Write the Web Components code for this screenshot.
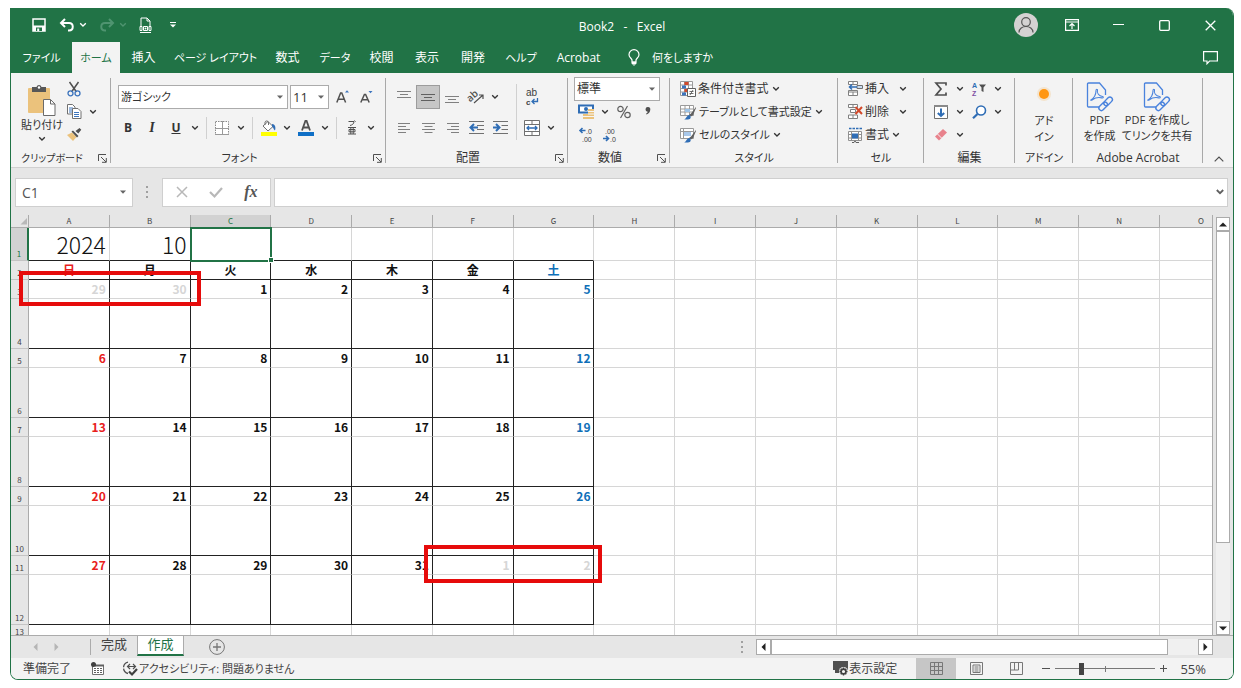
<!DOCTYPE html>
<html lang="ja">
<head>
<meta charset="utf-8">
<title>Book2 - Excel</title>
<style>
body { margin: 0; background: #fff; }
</style>
</head>
<body>
<excel-app></excel-app>
<script>
const ICONS = {
  save: [14, 14, '<path d="M1 1h12v12H1z" fill="none" stroke="#fff" stroke-width="1.5"/><path d="M1 7.5h12V13H1z" fill="#fff"/><path d="M4 9.5h6V13H4z" fill="#217346"/><path d="M5.2 10.5h2V13h-2z" fill="#fff"/>'],
  undo: [16, 14, '<path d="M6 1L2 5l4 4M2.500 5H10c5 0 5 7.500 0 7.500H9" fill="none" stroke="#fff" stroke-width="2"/>'],
  redo: [16, 14, '<path d="M10 1l4 4-4 4M13.500 5H6c-5 0-5 7.500 0 7.500h1" fill="none" stroke="#4f9470" stroke-width="2"/>'],
  preview: [13, 16, '<path d="M2 9V1h6l3 3v5M8 1v3h3" fill="none" stroke="#fff"/><path d="M1 9.500h2v4H1zM10 9.500h2v4h-2zM4.500 9.500h4v4h-4z" fill="none" stroke="#fff"/><path d="M1 15.500h11" stroke="#fff"/><circle cx="6.500" cy="11.500" r="1" fill="#fff"/>'],
  qat: [6, 6, '<path d="M0 .5h6" stroke="#fff"/><path d="M0 2.500h6L3 5.500z" fill="#fff"/>'],
  caret: [8, 6, '<path d="M1.200 1.200L4 4l2.800-2.800" fill="none" stroke="currentColor" stroke-width="1.300"/>'],
  bulb: [12, 17, '<path d="M4 13v-2C3.500 9 1 8.500 1 5.700a5 5 0 0 1 10 0C11 8.500 8.500 9 8 11v2z" fill="none" stroke="#fff" stroke-width="1.200"/><path d="M4 13h4v2H4zM5 16h2" fill="#fff" stroke="#fff" stroke-width=".8"/>'],
  user: [24, 24, '<circle cx="12" cy="12" r="12" fill="#d4d2d2"/><circle cx="12" cy="9" r="4.300" fill="none" stroke="#555" stroke-width="1.200"/><path d="M5 19.500c0-8 14-8 14 0" fill="none" stroke="#555" stroke-width="1.200"/>'],
  ribbonopt: [14, 12, '<path d="M.6.6h12.800v10.800H.6zM.6 3h12.800" fill="none" stroke="#fff" stroke-width="1.200"/><path d="M7 10V5M4.500 7L7 4.500 9.500 7" fill="none" stroke="#fff" stroke-width="1.200"/>'],
  min: [11, 11, '<path d="M0 4.500h11" stroke="#fff" stroke-width="1.200"/>'],
  max: [11, 11, '<rect x=".7" y=".7" width="9.600" height="9.600" rx="1" fill="none" stroke="#fff" stroke-width="1.300"/>'],
  close: [11, 11, '<path d="M.7.7l9.600 9.600M10.300.7L.7 10.300" stroke="#fff" stroke-width="1.300"/>'],
  comment: [15, 14, '<path d="M.6.6h13.800v9.400H6.500L4 12.800V10H.6z" fill="none" stroke="#fff" stroke-width="1.200"/>'],
  paste: [28, 31, '<rect x="0" y="3" width="22" height="25" rx="1" fill="#ebc27c"/><path d="M4 2h4.500a2.600 2.600 0 0 1 5 0H18v5H4z" fill="#575757"/><circle cx="11" cy="2.500" r="1.200" fill="#fff"/><path d="M15.500 14.500h7l4.500 4.500v11.500H15.500z" fill="#fff" stroke="#6b6b6b"/><path d="M22.500 14.500V19H27" fill="none" stroke="#6b6b6b"/>'],
  cut: [14, 16, '<path d="M2.500 1l7 10M11.500 1l-7 10" stroke="#505050" stroke-width="1.500"/><circle cx="3.500" cy="12.300" r="2.500" fill="none" stroke="#3c74bd" stroke-width="1.300"/><circle cx="10.500" cy="12.300" r="2.500" fill="none" stroke="#3c74bd" stroke-width="1.300"/>'],
  copy: [15, 15, '<path d="M.5.500h5L8 3v7H.5z" fill="#fff" stroke="#707070"/><path d="M2 4h4M2 6h4M2 8h4" stroke="#3c74bd"/><path d="M5.500 4.500h5.500L14 7.500v7H5.500z" fill="#fff" stroke="#707070"/><path d="M7 8.500h5M7 10.500h5M7 12.500h5" stroke="#3c74bd"/>'],
  painter: [15, 13, '<path d="M0 7l5-2.500L9.500 9 6 13z" fill="#ebc27c"/><path d="M4.500 3.500l1.500-1L11.500 8l-1.500 1.500zM8.500 3l4-3 1.800 1.800-3 3.700z" fill="#505050"/>'],
  grow: [14, 14, '<path d="M.8 12.500L4.600 3h1.200l3.800 9.500M2.300 9.300h5.800" fill="none" stroke="#505050" stroke-width="1.500"/><path d="M9 2.500l2-2.200 2 2.200z" fill="#3c74bd"/>'],
  shrink: [14, 14, '<path d="M.8 12.500L4.400 4.500h1.200l3.600 8M2.300 9.800h5.300" fill="none" stroke="#505050" stroke-width="1.500"/><path d="M8.500 1h4L10.500 3.200z" fill="#3c74bd"/>'],
  borders: [14, 14, '<path d="M.5.500h13v13H.5z" fill="#fff" stroke="#8a8a8a" stroke-dasharray="1.500 1"/><path d="M0 13.500h14M7.500 0v14M0 7.500h14" stroke="#9a9a9a"/>'],
  fill: [17, 16, '<path d="M3 6l5-4.500 5 5-5 4.500z" fill="#fff" stroke="#707070"/><path d="M5 5V2a2 2 0 0 1 3.500 0v3" fill="none" stroke="#707070"/><path d="M12 4c3 0 4 3 3 6.500-2-1-1-3-3-4z" fill="#2f6db5"/><path d="M1 12h16v4H1z" fill="#ff0"/>'],
  fontcolor: [16, 16, '<path d="M4 10.500L7.400 1h1.200L12 10.500M5.200 7.500h5.600" fill="none" stroke="#505050" stroke-width="1.800"/><path d="M0 12h16v4H0z" fill="#0f6fc6"/>'],
  phonetic: [10, 15, '<path d="M1.500 1.500h5.500C7 4 5 5 3 5.500M7.500.5l1 1.200" fill="none" stroke="#505050"/><path d="M1 7.500h8M1 14h8M2 9.500h6v2.300H2zM3.800 7.500V14M6.200 7.500V14" fill="none" stroke="#505050"/>'],
  vtop: [14, 14, '<path d="M0 1.500h14M3 4.500h8M0 7.500h14" stroke="#808080"/>'],
  vmid: [14, 14, '<path d="M0 4.500h14M3 7.500h8M0 10.500h14" stroke="#606060"/>'],
  vbot: [14, 14, '<path d="M0 6.500h14M3 9.500h8M0 12.500h14" stroke="#808080"/>'],
  left: [13, 12, '<path d="M0 1.500h12M0 4.500h8M0 7.500h12M0 10.500h8" stroke="#808080"/>'],
  center: [13, 12, '<path d="M0 1.500h13M2.500 4.500h8M0 7.500h13M2.500 10.500h8" stroke="#808080"/>'],
  right: [13, 12, '<path d="M1 1.500h12M5 4.500h8M1 7.500h12M5 10.500h8" stroke="#808080"/>'],
  orient: [16, 15, '<text x="-1" y="10" transform="rotate(-42 5 8)" font-family="Open Sans" font-size="10" font-weight="600" fill="#505050">ab</text><path d="M6 14l9-8M11 6h4v4" fill="none" stroke="#505050" stroke-width="1.200"/>'],
  outdent: [15, 13, '<path d="M0 .5h15M8 4.500h7M8 8.500h7M0 12.500h15" stroke="#707070"/><path d="M9 6.500H1.500M5 3L1.500 6.500 5 10" fill="none" stroke="#2f6db5" stroke-width="2"/>'],
  indent: [15, 13, '<path d="M0 .5h15M8.500 4.500H15M8.500 8.500H15M0 12.500h15" stroke="#707070"/><path d="M0 6.500h6.500M3 3l3.500 3.500L3 10" fill="none" stroke="#2f6db5" stroke-width="2"/>'],
  wrap: [14, 18, '<text x="1" y="8" font-family="Liberation Sans" font-size="10" fill="#404040">ab</text><text x="1" y="17" font-family="Liberation Sans" font-size="8" font-weight="700" fill="#404040">c</text><path d="M12.500 10v3.500H7.500M9.500 11L7 13.500 9.500 16" fill="none" stroke="#2f6db5" stroke-width="1.300"/>'],
  merge: [16, 16, '<path d="M.5.500h15v15H.5zM.5 4.500h15M.5 11.500h15M8 .5v4M8 11.500v4" fill="#fff" stroke="#707070"/><path d="M3 8h10M5 6L3 8l2 2M11 6l2 2-2 2" fill="none" stroke="#2f6db5" stroke-width="1.300"/>'],
  money: [17, 16, '<path d="M1 1.500h14v7H1z" fill="#fff" stroke="#2f6db5" stroke-width="2"/><circle cx="8" cy="5" r="2" fill="#2f6db5"/><path d="M10 5h6v10h-6zM5 10h5v5H5z" fill="#ebc27c"/><path d="M10 7.500h6M10 10h6M5 12.500h11" stroke="#f5f5f5"/>'],
  percent: [14, 14, '<circle cx="3.500" cy="4" r="2.700" fill="none" stroke="#606060" stroke-width="1.200"/><circle cx="10.500" cy="10" r="2.700" fill="none" stroke="#606060" stroke-width="1.200"/><path d="M10.500 1l-7 12" stroke="#606060" stroke-width="1.200"/>'],
  comma: [6, 9, '<path d="M3 0a2.300 2.300 0 0 1 2.300 2.500C5.300 5 3.500 6.800 1.500 7.500L1 6.700c1-.5 1.700-1.200 1.700-2A2.200 2.200 0 0 1 3 0z" fill="#505050"/>'],
  incdec: [14, 16, '<path d="M6.500 3.500H1M3.500 1L1 3.500 3.500 6" fill="none" stroke="#2f6db5" stroke-width="1.600"/><text x="7" y="6.500" font-family="Liberation Sans" font-size="7" fill="#404040">.0</text><text x="3" y="14.500" font-family="Liberation Sans" font-size="7" fill="#404040">.00</text>'],
  decdec: [14, 16, '<text x="2" y="6.500" font-family="Liberation Sans" font-size="7" fill="#404040">.00</text><path d="M0 11.500h5.500M3 9L5.500 11.500 3 14" fill="none" stroke="#2f6db5" stroke-width="1.600"/><text x="7" y="14.500" font-family="Liberation Sans" font-size="7" fill="#404040">.0</text>'],
  cond: [16, 16, '<path d="M.5.500h12v14H.5zM.5 4h12M.5 7.500h12M.5 11h12M4.500 .5v14M8.500 .5v14" fill="#fff" stroke="#9a9a9a"/><path d="M4.500 1h4v3h-4zM4.500 8h3v3h-3z" fill="#d2492a"/><path d="M2 4.500h4v3H2zM2 11.500h4v3H2z" fill="#3c74bd"/><path d="M7.500 7.500h8v8h-8z" fill="#fff" stroke="#606060"/><path d="M9.500 10.500h4M9.500 12.500h4M13 9l-3 5" stroke="#505050" stroke-width=".8"/>'],
  tablefmt: [17, 16, '<path d="M.5 1.500h13v10H.5zM.5 5h13M.5 8h13M5 1.500v10M9.500 1.500v10" fill="#fff" stroke="#9a9a9a"/><path d="M5 5h5v3H5z" fill="#9dc3e6"/><path d="M16 3l-5 6.500-2 1.500 2 1.500 2-1.500 3-7z" fill="#606060"/><path d="M4 15.500c2 0 2.500-4.500 5.500-4.500 2 1.500 1.500 4.500-1.500 4.500z" fill="#2f6db5"/>'],
  cellstyle: [17, 16, '<path d="M.5 1.500h13v10H.5zM.5 4.500h13M3.500 1.500v10" fill="#fff" stroke="#9a9a9a"/><path d="M4 5h7v4H4z" fill="#a9c8ea"/><path d="M16 3l-5 6.500-2 1.500 2 1.500 2-1.500 3-7z" fill="#606060"/><path d="M4 15.500c2 0 2.500-4.500 5.500-4.500 2 1.500 1.500 4.500-1.500 4.500z" fill="#2f6db5"/>'],
  insert: [15, 15, '<path d="M.5.500h9v3h-9zM5 .5v3M.5 11h9v3.500h-9zM5 11v3.500M.5 11V9.500h9V11" fill="#fff" stroke="#808080"/><path d="M9 4.500h5.500v3H9z" fill="#c9dcf0" stroke="#707070"/><path d="M9 6H1.500M4 3.500L1.500 6 4 8.500" fill="none" stroke="#2f6db5" stroke-width="1.500"/>'],
  remove: [15, 15, '<path d="M.5.500h9v3h-9zM5 .5v3M.5 11h9v3.500h-9zM5 11v3.500M2.500 5.500h5v3h-5z" fill="#fff" stroke="#808080"/><path d="M7.500 3l6.500 7M14 3l-6.500 7" stroke="#d2492a" stroke-width="2"/>'],
  format: [15, 16, '<path d="M1 1.500h13" stroke="#2f6db5" stroke-width="1.500" stroke-dasharray="2.500 1"/><path d="M.5 4.500h13v9H.5zM3.500 4.500v9M10.500 4.500v9M.5 7.500h13M.5 11h13" fill="#fff" stroke="#909090"/><path d="M4 6.500h6v5H4z" fill="#2f6db5"/><path d="M4 15.500h2l1-1.500 1 1.500h3" fill="none" stroke="#606060"/>'],
  sum: [12, 14, '<path d="M11 3.500V1H1l5 6-5 6h10v-2.500" fill="none" stroke="#505050" stroke-width="1.700"/>'],
  sort: [14, 16, '<text x="0" y="7" font-family="Liberation Sans" font-size="7" font-weight="700" fill="#2f6db5">A</text><text x="0" y="15" font-family="Liberation Sans" font-size="7" font-weight="700" fill="#7e4fa3">Z</text><path d="M7 3.500h7l-2.500 3V11l-2-1V6.500z" fill="#505050"/>'],
  filldown: [14, 14, '<path d="M.5.500h13v13H.5z" fill="#fff" stroke="#707070"/><path d="M0 0h14v2H0z" fill="#8a8a8a"/><path d="M7 3.500V11M3.800 8L7 11l3.200-3" fill="none" stroke="#2f6db5" stroke-width="2"/>'],
  find: [15, 14, '<circle cx="9" cy="5.500" r="4.500" fill="#fff" stroke="#2f6db5" stroke-width="1.600"/><path d="M5.500 9L1 13.300" stroke="#2f6db5" stroke-width="2.200"/>'],
  erase: [14, 13, '<path d="M1 8.500L9 1l4 3.500-8 8z" fill="#e8828c"/><path d="M3.500 6l4 4" stroke="#f5f5f5"/>'],
  dot: [24, 24, '<circle cx="12" cy="12" r="7" fill="#f8b860" opacity=".25"/><circle cx="12" cy="12" r="5" fill="#ff9612"/>'],
  pdf: [28, 30, '<path d="M19.500 13V8l-6-7h-11a1 1 0 0 0-1 1v22a1 1 0 0 0 1 1H13" fill="none" stroke="#4a83dd" stroke-width="1.300"/><path d="M5 18c3-2 5-6 5-9.500 0-1.600 1.700-1.600 1.500 0C10.500 11 13 14 16.500 14.500c1.300.4 1 1.600-.6 1.400-3.700-.8-6.500-.4-9.500 1.900-1.100.8-2.200.3-1.400.2z" fill="none" stroke="#4a83dd" stroke-width="1.100"/><g transform="rotate(-45 20 21.500)" fill="none" stroke="#4a83dd" stroke-width="1.400"><rect x="11" y="19" width="10" height="5" rx="2.500"/><rect x="18" y="19" width="10" height="5" rx="2.500"/></g>'],
  launcher: [9, 9, '<path d="M.5 7V.5H8" fill="none" stroke="#505050"/><path d="M3 3l5 5M8.300 4v4.300H4" fill="none" stroke="#505050"/>'],
  up: [10, 6, '<path d="M.7 5.300L5 1l4.300 4.300" fill="none" stroke="#505050" stroke-width="1.200"/>'],
  tri: [6, 4, '<path d="M0 .5h6L3 3.800z" fill="#666"/>'],
  dots: [3, 12, '<path d="M0 0h2v2H0zM0 5h2v2H0zM0 10h2v2H0z" fill="#a0a0a0"/>'],
  cancel: [12, 12, '<path d="M1 1l10 10M11 1L1 11" stroke="#b8b8b8" stroke-width="1.500"/>'],
  enter: [14, 11, '<path d="M1 5l4.500 4.500L13 1" fill="none" stroke="#b8b8b8" stroke-width="2.200"/>'],
  fdown: [8, 6, '<path d="M.8 1L4 4.200 7.200 1" fill="none" stroke="#606060" stroke-width="1.800"/>'],
  aup: [8, 5, '<path d="M0 4.500h8L4 .5z" fill="#222"/>'],
  adown: [8, 5, '<path d="M0 .5h8L4 4.500z" fill="#222"/>'],
  aleft: [5, 8, '<path d="M4.500 0v8L.5 4z" fill="#222"/>'],
  aright: [5, 8, '<path d="M.5 0v8l4-4z" fill="#222"/>'],
  navl: [5, 8, '<path d="M4.500 0v8L.5 4z" fill="#b5b5b5"/>'],
  navr: [5, 8, '<path d="M.5 0v8l4-4z" fill="#b5b5b5"/>'],
  plus: [16, 16, '<circle cx="8" cy="8" r="7.400" fill="none" stroke="#777"/><path d="M8 4v8M4 8h8" stroke="#777" stroke-width="1.300"/>'],
  corner: [8, 8, '<path d="M7 1v6.500H.5z" fill="#b8b8b8"/>'],
  macro: [13, 13, '<path d="M1.500 3.500h11v9h-11z" fill="#fff" stroke="#707070"/><path d="M3 6.500h9M3 8.500h9M3 10.500h9" stroke="#606060" stroke-dasharray="2 1"/><path d="M4 2.500h9v2H4z" fill="#606060"/><circle cx="2.500" cy="2.500" r="2.500" fill="#404040"/>'],
  access: [16, 15, '<path d="M6 1.200A5.800 5.800 0 0 0 6 12.500" fill="none" stroke="#505050" stroke-width="1.300" stroke-dasharray="7 1.500"/><path d="M5 5.500h8M11 3l2.500 2.500L11 8M8 3L5.500 5.500 8 8" fill="none" stroke="#505050" stroke-width="1.200"/><path d="M7 10.500l3 3 5-5.500" fill="none" stroke="#404040" stroke-width="2.200"/>'],
  display: [15, 15, '<path d="M0 0h15v9H0zM2 9h5v3H2z" fill="#505050"/><circle cx="10.500" cy="10.500" r="4.500" fill="#f3f3f3"/><circle cx="10.500" cy="10.500" r="2.400" fill="#f3f3f3" stroke="#404040" stroke-width="1.600"/><path d="M10.500 6.500v1.500M10.500 13v1.500M6.500 10.500H8M13 10.500h1.500M7.700 7.700l1 1M12.300 12.300l1 1M13.300 7.700l-1 1M8.700 12.300l-1 1" stroke="#404040" stroke-width="1.400"/>'],
  vnormal: [13, 13, '<path d="M.5.500h12v12H.5zM4.500 .5v12M8.500 .5v12M.5 4.500h12M.5 8.500h12" fill="none" stroke="#777"/>'],
  vpage: [13, 13, '<path d="M.5.500h12v12H.5zM3 3h7v7.500H3z" fill="none" stroke="#777"/><path d="M4.500 5h4M4.500 7h4M4.500 9h4" stroke="#777"/>'],
  vbreak: [13, 13, '<path d="M.5.500h12v12H.5zM4.500 .5v7.500M8.500 .5v7.500H.5" fill="none" stroke="#777"/>'],
  zminus: [8, 8, '<path d="M0 3.500h8" stroke="#505050"/>'],
  zplus: [8, 8, '<path d="M0 3.500h7M3.500 0v7" stroke="#505050"/>']
};

const BASE = `
*, *::before, *::after { box-sizing: border-box; }
button { font: inherit; font-feature-settings: inherit; color: inherit; background: none; border: 0; padding: 0; margin: 0; display: flex; align-items: center; justify-content: center; }
input, select { font: inherit; font-feature-settings: inherit; color: inherit; margin: 0; border-radius: 0; outline: 0; }
`;

function component(tag, render) {
  customElements.define(tag, class extends HTMLElement {
    constructor() {
      super();
      this.attachShadow({ mode: 'open' });
    }
    connectedCallback() {
      if (this.shadowRoot.childNodes.length) return;
      const t = document.createElement('template');
      t.innerHTML = '<style>' + BASE + '</style>' + render(this);
      this.shadowRoot.append(t.content.cloneNode(true));
    }
  });
}

component('x-icon', el => {
  const [w, h, body] = ICONS[el.getAttribute('name')];
  return `<style>:host { display: block; flex: none; width: ${w}px; height: ${h}px; } svg { display: block; overflow: visible; }</style>
  <svg width="${w}" height="${h}" viewBox="0 0 ${w} ${h}" aria-hidden="true">${body}</svg>`;
});

component('tool-button', el => `
<style>
:host { display: block; flex: none; width: 24px; height: 24px; }
:host([narrow]) { width: 14px; }
:host([wide]) { width: auto; }
:host([tall]) { width: auto; height: auto; }
button { width: 100%; height: 100%; white-space: nowrap; }
:host([wide]) button { gap: 2px; }
:host([tall]) button { flex-direction: column; line-height: 16px; }
:host([selected]) button { background: #c6c6c6; border: 1px solid #9c9c9c; }
</style>
<button type="button" aria-label="${el.getAttribute('label') || el.textContent.trim()}">${el.hasAttribute('icon') ? `<x-icon name="${el.getAttribute('icon')}"></x-icon>` : ''}<slot></slot></button>`);

component('ribbon-group', el => `
<style>
:host { display: flex; flex-direction: column; flex: none; height: 94px; position: relative; }
:host::after { content: ""; position: absolute; right: 0; top: 5px; width: 1px; height: 85px; background: #a8a8a8; }
.body { height: 73px; padding-top: 4px; }
.foot { display: flex; align-items: center; height: 18px; margin-top: 3px; line-height: 18px; white-space: nowrap; }
.foot span { flex: 1; text-align: center; }
:host([kana]) .foot span { font-size: 11px; }
:host([small]) .foot span { font-size: 10px; }
.foot button { width: 18px; height: 14px; }
</style>
<div class="body"><slot></slot></div>
<div class="foot"><span>${el.getAttribute('label')}</span>${el.hasAttribute('launcher') ? `<button type="button" aria-label="オプション"><x-icon name="launcher"></x-icon></button>` : ''}</div>`);

component('title-bar', () => `
<style>
:host { display: grid; grid-template-columns: 1fr auto 1fr; align-items: center; height: 34px; background: #217346; color: #fff; }
.qat, .win { display: flex; align-items: center; }
.qat { padding-left: 18px; }
.win { justify-content: flex-end; }
.qat button { height: 24px; width: 20px; }
.qat .c { width: 12px; }
.qat .dim { color: #4f9470; }
.qat .p { margin: 0 8px 0 6px; }
.qat .gap { margin-left: 8px; }
h1 { font-size: 12px; font-weight: 400; margin: 3px 0 0; white-space: pre; line-height: 18px; }
.win button { width: 46px; height: 32px; }
</style>
<div class="qat">
<button type="button" aria-label="上書き保存"><x-icon name="save"></x-icon></button>
<button type="button" class="gap" aria-label="元に戻す"><x-icon name="undo"></x-icon></button>
<button type="button" class="c" aria-label="元に戻す一覧"><x-icon name="caret"></x-icon></button>
<button type="button" class="gap" aria-label="やり直し"><x-icon name="redo"></x-icon></button>
<button type="button" class="c dim" aria-label="やり直し一覧"><x-icon name="caret"></x-icon></button>
<button type="button" class="p" aria-label="印刷プレビュー"><x-icon name="preview"></x-icon></button>
<button type="button" aria-label="クイック アクセス ツール バー"><x-icon name="qat"></x-icon></button>
</div>
<h1>Book2   -   Excel</h1>
<div class="win">
<button type="button" aria-label="アカウント"><x-icon name="user"></x-icon></button>
<button type="button" aria-label="リボンの表示オプション"><x-icon name="ribbonopt"></x-icon></button>
<button type="button" aria-label="最小化"><x-icon name="min"></x-icon></button>
<button type="button" aria-label="最大化"><x-icon name="max"></x-icon></button>
<button type="button" aria-label="閉じる"><x-icon name="close"></x-icon></button>
</div>`);

component('ribbon-tabs', () => `
<style>
:host { display: flex; height: 31px; background: #217346; color: #fff; padding-right: 15px; }
button { height: 31px; white-space: nowrap; }
.k { font-size: 11px; }
.on { background: #f3f3f3; color: #217346; }
.tell { gap: 12px; margin-left: 17px; }
.end { margin-left: auto; }
</style>
<button type="button" class="k" style="width:61px">ファイル</button>
<button type="button" class="k on" style="width:48px">ホーム</button>
<button type="button" style="width:47px">挿入</button>
<button type="button" class="k" style="width:97px">ページ レイアウト</button>
<button type="button" style="width:47px">数式</button>
<button type="button" class="k" style="width:48px">データ</button>
<button type="button" style="width:45px">校閲</button>
<button type="button" style="width:46px">表示</button>
<button type="button" style="width:46px">開発</button>
<button type="button" class="k" style="width:50px">ヘルプ</button>
<button type="button" style="width:65px">Acrobat</button>
<button type="button" class="tell k"><x-icon name="bulb"></x-icon>何をしますか</button>
<button type="button" class="end" aria-label="コメント"><x-icon name="comment"></x-icon></button>`);

component('ribbon-bar', () => {
  const caret = '<tool-button narrow icon="caret" label="一覧"></tool-button>';
  const t = (icon, label, extra = '') => `<tool-button icon="${icon}" label="${label}" ${extra}></tool-button>`;
  return `
<style>
:host { display: flex; background: #f3f3f3; color: #333; border-bottom: 1px solid #d0d0d0; height: 95px; }
.row2, .row3 { display: flex; align-items: center; }
.row2 { height: 31px; }
.row3 { height: 23px; }
.two { padding: 4px 0 0 5px; }
.sep { width: 1px; height: 22px; background: #d0d0d0; margin: 0 3px 0 4px; }
.align { display: flex; padding: 4px 0 0 6px; }
.left { width: 120px; }
.align .sep { height: 56px; margin-top: 3px; }
.clip { display: flex; padding-left: 6px; }
.clip .big { width: 50px; padding-top: 4px; }
.clip .col { margin-left: -5px; }
.select { position: relative; display: block; }
.select select { appearance: none; display: block; width: 100%; height: 24px; background: #fff; border: 1px solid #ababab; padding: 0 2px; }
.select x-icon { position: absolute; right: 5px; top: 10px; }
.k { font-size: 11px; }
.num { padding-left: 6px; }
.num .select { width: 86px; }
.lines { padding-left: 10px; }
.far tool-button[narrow] { margin-left: 7px; }
.edit { padding-left: 5px; }
.addin { display: flex; justify-content: center; padding-top: 5px; text-align: center; }
.acro { display: flex; justify-content: center; gap: 6px; padding-top: 5px; text-align: center; }
.last { margin: auto 8px 4px auto; width: 12px; height: 8px; }
</style>
<ribbon-group label="クリップボード" small launcher style="width:100px">
  <div class="clip">
    <tool-button tall class="big k" label="貼り付け"><x-icon name="paste"></x-icon><span style="margin:1px 0 3px">貼り付け</span><x-icon name="caret"></x-icon></tool-button>
    <div class="col">
      <div class="row3">${t('cut', '切り取り')}</div>
      <div class="row3">${t('copy', 'コピー')}${caret}</div>
      <div class="row3">${t('painter', '書式のコピー')}</div>
    </div>
  </div>
</ribbon-group>
<ribbon-group label="フォント" kana launcher style="width:275px">
  <div class="two">
    <div class="row2">
      <label class="select k" style="width:170px;margin:0 2px"><select aria-label="フォント"><option>游ゴシック</option></select><x-icon name="tri"></x-icon></label>
      <label class="select" style="width:39px;margin-right:2px;font-size:13px"><select aria-label="フォント サイズ"><option>11</option></select><x-icon name="tri"></x-icon></label>
      ${t('grow', 'フォント サイズの拡大')}${t('shrink', 'フォント サイズの縮小')}
    </div>
    <div class="row2" style="font-size:12px">
      <tool-button label="太字"><b>B</b></tool-button><tool-button label="斜体"><b><i style="font-family:'Liberation Serif',serif;font-size:14px">I</i></b></tool-button><tool-button label="下線"><b><u>U</u></b></tool-button>${caret}
      <span class="sep"></span>${t('borders', '罫線')}${caret}
      <span class="sep"></span>${t('fill', '塗りつぶしの色')}${caret}${t('fontcolor', 'フォントの色')}${caret}
      <span class="sep"></span>${t('phonetic', 'ふりがな')}${caret}
    </div>
  </div>
</ribbon-group>
<ribbon-group label="配置" launcher style="width:182px">
  <div class="align">
    <div class="left">
      <div class="row2">${t('vtop', '上揃え')}${t('vmid', '上下中央揃え', 'selected')}${t('vbot', '下揃え')}${t('orient', '方向')}${caret}</div>
      <div class="row2">${t('left', '左揃え')}${t('center', '中央揃え')}${t('right', '右揃え')}${t('outdent', 'インデントを減らす')}${t('indent', 'インデントを増やす')}</div>
    </div>
    <span class="sep"></span>
    <div>
      <div class="row2">${t('wrap', '折り返して全体を表示する')}</div>
      <div class="row2">${t('merge', 'セルを結合して中央揃え')}${caret}</div>
    </div>
  </div>
</ribbon-group>
<ribbon-group label="数値" launcher style="width:102px">
  <div class="num">
    <div class="row3"><label class="select"><select aria-label="表示形式"><option>標準</option></select><x-icon name="tri"></x-icon></label></div>
    <div class="row3">${t('money', '通貨表示形式')}${caret}${t('percent', 'パーセント スタイル')}${t('comma', '桁区切りスタイル')}</div>
    <div class="row3">${t('incdec', '小数点以下の表示桁数を増やす')}${t('decdec', '小数点以下の表示桁数を減らす')}</div>
  </div>
</ribbon-group>
<ribbon-group label="スタイル" kana style="width:168px">
  <div class="lines">
    <div class="row3"><tool-button wide icon="cond">条件付き書式</tool-button>${caret}</div>
    <div class="row3 k"><tool-button wide icon="tablefmt">テーブルとして書式設定</tool-button>${caret}</div>
    <div class="row3 k"><tool-button wide icon="cellstyle">セルのスタイル</tool-button>${caret}</div>
  </div>
</ribbon-group>
<ribbon-group label="セル" kana style="width:86px">
  <div class="lines">
    <div class="row3 far"><tool-button wide icon="insert">挿入</tool-button>${caret}</div>
    <div class="row3 far"><tool-button wide icon="remove">削除</tool-button>${caret}</div>
    <div class="row3"><tool-button wide icon="format">書式</tool-button>${caret}</div>
  </div>
</ribbon-group>
<ribbon-group label="編集" style="width:91px">
  <div class="edit">
    <div class="row3">${t('sum', 'オート SUM')}${caret}${t('sort', '並べ替えとフィルター')}${caret}</div>
    <div class="row3">${t('filldown', 'フィル')}${caret}${t('find', '検索と選択')}${caret}</div>
    <div class="row3">${t('erase', 'クリア')}${caret}</div>
  </div>
</ribbon-group>
<ribbon-group label="アドイン" kana style="width:58px">
  <div class="addin k"><tool-button tall label="アドイン"><x-icon name="dot"></x-icon><span style="margin-top:7px">アド<br>イン</span></tool-button></div>
</ribbon-group>
<ribbon-group label="Adobe Acrobat" style="width:130px">
  <div class="acro k">
    <tool-button tall label="PDF を作成"><x-icon name="pdf"></x-icon><span>PDF<br>を作成</span></tool-button>
    <tool-button tall label="PDF を作成してリンクを共有"><x-icon name="pdf"></x-icon><span>PDF を作成し<br>てリンクを共有</span></tool-button>
  </div>
</ribbon-group>
<button type="button" class="last" aria-label="リボンを折りたたむ"><x-icon name="up"></x-icon></button>`;
});

component('formula-bar', () => `
<style>
:host { display: flex; align-items: center; height: 47px; padding: 1px 5px 0 4px; background: #e6e6e6; color: #555; }
.box { display: flex; align-items: center; height: 29px; background: #fff; border: 1px solid #cfcfcf; }
.name { width: 118px; padding-right: 6px; }
input { border: 0; background: none; min-width: 0; flex: 1; height: 100%; padding: 0 6px; font-size: 14px; }
.grip { margin: 0 13px; }
.btns { width: 109px; justify-content: space-around; padding: 0 2px; }
.btns button { width: 34px; height: 27px; }
.fx { font: italic 700 16px "Liberation Serif", serif; }
.formula { flex: 1; margin-left: 3px; padding-right: 3px; }
</style>
<div class="box name"><input aria-label="名前ボックス" value="C1"><x-icon name="tri"></x-icon></div>
<x-icon class="grip" name="dots"></x-icon>
<div class="box btns"><button type="button" aria-label="キャンセル"><x-icon name="cancel"></x-icon></button><button type="button" aria-label="入力"><x-icon name="enter"></x-icon></button><button type="button" class="fx" aria-label="関数の挿入">fx</button></div>
<div class="box formula"><input aria-label="数式バー"><x-icon name="fdown"></x-icon></div>`);

component('call-out', () => `
<style>
:host { display: block; position: absolute; z-index: 3; left: -10px; top: -9px; width: calc(200% + 22px); height: 35px; border: 4px solid #e60b0b; pointer-events: none; }
:host([tall]) { left: -9px; top: -11px; width: calc(200% + 19px); height: 38px; }
</style>`);

component('sheet-grid', () => {
  const cols = 'ABCDEFGHIJKLMNO'.split('');
  const days = ['日', '月', '火', '水', '木', '金', '土'];
  const dates = { 3: [29, 30, 1, 2, 3, 4, 5], 5: [6, 7, 8, 9, 10, 11, 12], 7: [13, 14, 15, 16, 17, 18, 19], 9: [20, 21, 22, 23, 24, 25, 26], 11: [27, 28, 29, 30, 31, 1, 2] };
  let body = '';
  for (let r = 1; r <= 13; r++) {
    const kind = r === 1 ? 'title' : r === 2 ? 'days' : r === 13 ? 'rest' : dates[r] ? 'date' : 'memo';
    body += `<tr class="${kind}"><th scope="row"${r === 1 ? ' class="sel"' : ''}>${r}</th>`;
    cols.forEach((c, i) => {
      let text = '', cls = [];
      if (i < 7 && r < 13) {
        cls.push('cal');
        if (i === 0) cls.push('sun');
        if (i === 6) cls.push('sat');
        if (r === 2) text = days[i];
        if (dates[r]) text = dates[r][i];
        if ((r === 3 && i < 2) || (r === 11 && i > 4)) cls.push('other');
      }
      if (r === 1 && i === 0) text = '2024';
      if (r === 1 && i === 1) text = '10';
      if (r === 1 && i === 2) text = '<span class="cursor"></span>';
      if (r === 3 && i === 0) { cls.push('anchor'); text += '<call-out></call-out>'; }
      if (r === 11 && i === 5) { cls.push('anchor'); text += '<call-out tall></call-out>'; }
      body += `<td class="${cls.join(' ')}">${text}</td>`;
    });
    body += '</tr>';
  }
  return `
<style>
:host { display: flex; flex: 1; min-height: 0; background: #e6e6e6; font-family: "Noto Sans CJK JP", sans-serif; font-feature-settings: normal; color: #111; }
.view { flex: 1; min-width: 0; overflow: hidden; border-right: 1px solid #ababab; background: #fff; }
table { width: 100%; table-layout: fixed; border-collapse: separate; border-spacing: 0; }
th, td { padding: 0; border: 0 solid #d6d6d6; border-width: 0 1px 1px 0; line-height: 1; }
thead th { height: 13px; background: #e6e6e6; color: #444; font-size: 8px; font-weight: 400; border-color: #ababab; }
thead th:last-child { text-align: right; padding-right: 8px; border-right: 0; }
td:last-child { border-right: 0; }
thead x-icon { margin-left: auto; }
thead .on { background: #d2d2d2; color: #217346; border-bottom-color: #217346; }
tbody th { background: #e6e6e6; color: #444; font-size: 8px; font-weight: 400; vertical-align: bottom; padding-bottom: 2px; border-bottom-color: #c4c4c4; border-right-color: #ababab; }
tbody th.sel { background: #d2d2d2; color: #217346; border-right: 2px solid #217346; }
.title { height: 33px; font-size: 23px; font-weight: 300; }
.title td { text-align: right; padding-right: 3px; position: relative; }
.title .cal { border-bottom-color: #222; }
.days { height: 19px; }
.days td { font-size: 12px; font-weight: 700; text-align: center; }
.date { height: 19px; }
.date td { font-size: 12px; font-weight: 700; text-align: right; padding-right: 3px; }
.memo { height: 50px; }
.rest { height: 12px; }
.rest th { line-height: 8px; padding: 0; }
.days .cal, .memo .cal { border-color: #222; }
.date .cal { border-right-color: #222; }
.sun { color: #e8201c; }
.sat { color: #0f6fb8; }
.title .sun, .title .sat { color: #111; }
.date .other { color: #d6d6d6; }
.anchor { position: relative; }
.cursor { position: absolute; z-index: 2; inset: -1px -2px -2px -1px; border: 2px solid #217346; }
.cursor::after { content: ""; position: absolute; right: -4px; bottom: -3px; width: 6px; height: 6px; background: #217346; border: 1px solid #fff; }
.bar { width: 20px; flex: none; display: flex; flex-direction: column; padding: 2px 3px 0 3px; }
.bar button { width: 14px; height: 14px; background: #fff; border: 1px solid #ababab; flex: none; }
.track { flex: 1; background: #f0f0f0; }
.thumb { height: 80%; background: #fff; border: 1px solid #ababab; }
</style>
<div class="view"><table>
<colgroup><col style="width:18px"><col span="14"><col style="width:52px"></colgroup>
<thead><tr><th><x-icon name="corner"></x-icon></th>${cols.map((c, i) => `<th scope="col"${i === 2 ? ' class="on"' : ''}>${c}</th>`).join('')}</tr></thead>
<tbody>${body}</tbody></table></div>
<div class="bar"><button type="button" aria-label="上へ"><x-icon name="aup"></x-icon></button><div class="track"><div class="thumb"></div></div><button type="button" aria-label="下へ"><x-icon name="adown"></x-icon></button></div>`;
});

component('sheet-tabs', () => `
<style>
:host { display: flex; height: 23px; background: #e6e6e6; border-top: 1px solid #ababab; color: #444; padding-right: 20px; font-size: 13px; }
button { height: 20px; }
.nav { width: 21px; height: 22px; }
.first { margin-left: 14px; }
.sep { width: 1px; height: 16px; background: #ababab; margin: 3px 0 0 23px; }
.tab { width: 46px; padding-bottom: 4px; }
.on { width: 47px; background: #fff; color: #217346; border: 1px solid #ababab; border-top: 0; border-bottom: 2px solid #217346; padding-bottom: 2px; }
.add { width: 16px; margin: 1px 0 0 25px; }
.grip { margin: 5px 12px 0 auto; }
.scroll { display: flex; width: 38%; margin-top: 3px; height: 16px; background: #f0f0f0; }
.scroll button { width: 15px; height: 16px; background: #fff; border: 1px solid #ababab; flex: none; }
.track { flex: 1; }
.thumb { width: 93%; height: 16px; background: #fff; border: 1px solid #ababab; }
</style>
<button type="button" class="nav first" aria-label="前のシート"><x-icon name="navl"></x-icon></button>
<button type="button" class="nav" aria-label="次のシート"><x-icon name="navr"></x-icon></button>
<span class="sep"></span>
<button type="button" class="tab">完成</button>
<button type="button" class="tab on">作成</button>
<button type="button" class="add" aria-label="新しいシート"><x-icon name="plus"></x-icon></button>
<x-icon class="grip" name="dots"></x-icon>
<div class="scroll"><button type="button" aria-label="左へ"><x-icon name="aleft"></x-icon></button><div class="track"><div class="thumb"></div></div><button type="button" aria-label="右へ"><x-icon name="aright"></x-icon></button></div>`);

component('status-bar', () => `
<style>
:host { display: flex; align-items: center; height: 21px; background: #f3f3f3; color: #444; padding: 0 27px 0 12px; white-space: nowrap; }
button { height: 21px; }
.rec { margin: 0 18px 0 20px; }
.acc { gap: 1px; font-size: 11px; }
.disp { margin: 0 19px 0 auto; gap: 1px; }
.view { width: 40px; }
.on { background: #c6c6c6; }
.zoom { display: flex; align-items: center; gap: 5px; margin: 0 12px 0 6px; }
.pct { font-size: 13px; }
input { appearance: none; width: 100px; height: 12px; background: linear-gradient(#777, #777) 50% 50% / 100% 1px no-repeat, linear-gradient(#777, #777) 50% 50% / 1px 6px no-repeat; }
input::-webkit-slider-thumb { appearance: none; width: 5px; height: 12px; background: #444; }
</style>
<span>準備完了</span>
<button type="button" class="rec" aria-label="マクロの記録"><x-icon name="macro"></x-icon></button>
<button type="button" class="acc"><x-icon name="access"></x-icon>アクセシビリティ: 問題ありません</button>
<button type="button" class="disp"><x-icon name="display"></x-icon>表示設定</button>
<button type="button" class="view on" aria-label="標準"><x-icon name="vnormal"></x-icon></button>
<button type="button" class="view" aria-label="ページ レイアウト"><x-icon name="vpage"></x-icon></button>
<button type="button" class="view" aria-label="改ページ プレビュー"><x-icon name="vbreak"></x-icon></button>
<div class="zoom"><button type="button" aria-label="縮小"><x-icon name="zminus"></x-icon></button><input type="range" min="0" max="100" value="25" aria-label="ズーム"><button type="button" aria-label="拡大"><x-icon name="zplus"></x-icon></button></div>
<span class="pct">55%</span>`);

component('excel-app', () => `
<style>
:host { display: flex; flex-direction: column; height: 100vh; padding: 8px 7px 8px 10px; box-sizing: border-box; font: 12px/16px "Open Sans", "Noto Sans CJK JP", sans-serif; font-feature-settings: "palt"; }
main { flex: 1; min-height: 0; display: flex; flex-direction: column; border: 1px solid #217346; border-top: 0; border-radius: 0 8px 8px 8px; overflow: hidden; }
</style>
<main>
<title-bar></title-bar>
<ribbon-tabs></ribbon-tabs>
<ribbon-bar></ribbon-bar>
<formula-bar></formula-bar>
<sheet-grid></sheet-grid>
<sheet-tabs></sheet-tabs>
<status-bar></status-bar>
</main>`);
</script>
</body>
</html>
